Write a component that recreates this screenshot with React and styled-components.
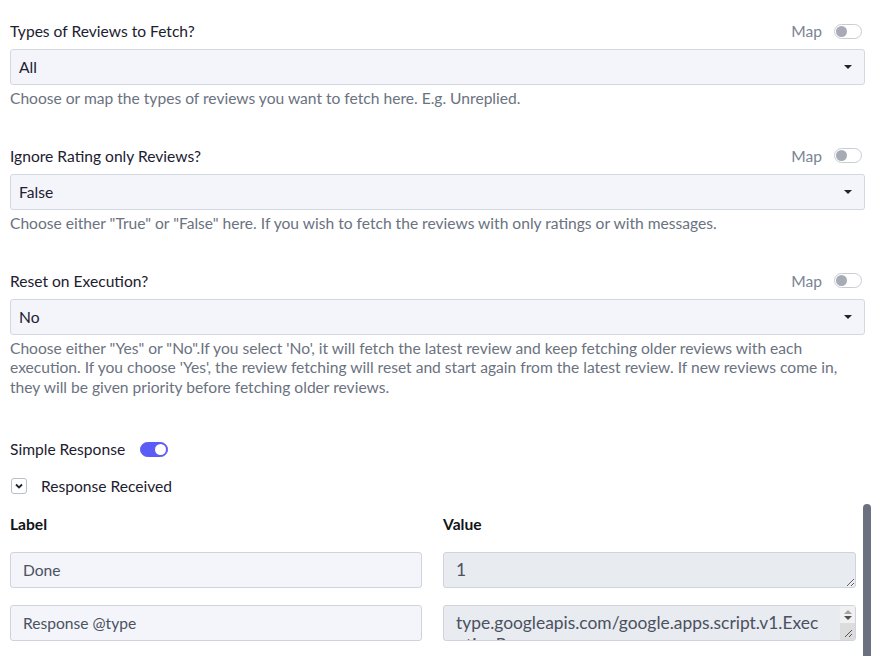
import React from 'react';
import styled, { createGlobalStyle } from 'styled-components';

const GlobalStyle = createGlobalStyle`
  html, body {
    margin: 0;
    padding: 0;
    background: #ffffff;
    overflow: hidden;
  }
  body {
    font-family: Lato, "Open Sans", sans-serif;
    font-size: 15.6px;
    color: #1f2433;
  }
  * {
    box-sizing: border-box;
  }
`;

const Page = styled.div`
  width: 879px;
  height: 656px;
  padding: 20px 14px 0 10px;
  display: flex;
  flex-direction: column;
`;

const Field = styled.section`
  display: flex;
  flex-direction: column;
  margin-bottom: 36px;
`;

const LabelRow = styled.div`
  height: 22px;
  display: flex;
  align-items: center;
  justify-content: space-between;
`;

const FieldLabel = styled.span`
  color: #1c2030;
`;

const MapSwitch = styled.div`
  display: flex;
  align-items: center;
  gap: 12px;
  padding-right: 3px;
  color: #7b8494;
`;

const Toggle = styled.span`
  position: relative;
  width: 28px;
  height: 15px;
  border-radius: 8px;
  border: 1px solid ${(p) => (p.$on ? '#5b5cf6' : '#c9ccd3')};
  background: ${(p) => (p.$on ? '#5b5cf6' : '#ffffff')};
  display: inline-block;

  &::after {
    content: '';
    position: absolute;
    top: 1px;
    left: ${(p) => (p.$on ? '14px' : '1px')};
    width: 11px;
    height: 11px;
    border-radius: 50%;
    background: ${(p) => (p.$on ? '#ffffff' : '#a7abb6')};
  }
`;

const Select = styled.div`
  margin-top: 7px;
  height: 36px;
  border: 1px solid #d3d7e0;
  border-radius: 3px;
  background: #f3f5fa;
  display: flex;
  align-items: center;
  justify-content: space-between;
  padding: 0 12px 0 8px;
  color: #1c2030;
`;

const Caret = styled.span`
  width: 0;
  height: 0;
  border-left: 4px solid transparent;
  border-right: 4px solid transparent;
  border-top: 4px solid #1f2433;
`;

const Help = styled.p`
  margin: 4px 0 0;
  line-height: 19.8px;
  color: #6b7280;
`;

const SwitchRow = styled.div`
  height: 32px;
  margin-top: 3px;
  display: flex;
  align-items: center;
  gap: 15px;
  color: #1c2030;
`;

const Collapse = styled.div`
  height: 22px;
  margin-top: 16px;
  display: flex;
  align-items: center;
  gap: 14px;
  padding-left: 1px;
  color: #1c2030;
`;

const ChevronBox = styled.span`
  width: 16px;
  height: 16px;
  border: 1px solid #b9bec8;
  border-radius: 3px;
  display: flex;
  align-items: center;
  justify-content: center;
`;

/* table panel with its own scroll thumb drawn on the right edge */
const TableScroll = styled.div`
  position: relative;
  margin-top: 9px;
  margin-right: -6px;
  height: 200px;
  overflow: hidden;
`;

const ScrollThumb = styled.div`
  position: absolute;
  top: 0;
  right: 0;
  width: 8px;
  height: 220px;
  border-radius: 4px;
  background: #6b7180;
`;

const Grid = styled.div`
  display: grid;
  grid-template-columns: 412px 413px;
  column-gap: 21px;
  row-gap: 17px;
  padding-top: 10px;
`;

const HeadCell = styled.div`
  height: 20px;
  line-height: 20px;
  margin-bottom: 1px;
  font-weight: 700;
  color: #111318;
`;

const KeyInput = styled.input`
  height: 36px;
  width: 100%;
  border: 1px solid #ced3dc;
  border-radius: 3px;
  background: #f3f5fa;
  padding: 0 12px;
  font-family: inherit;
  font-size: 15.6px;
  color: #4b5160;
  outline: none;
`;

const ValueWrap = styled.div`
  position: relative;
`;

const ValueArea = styled.textarea`
  height: 36px;
  width: 100%;
  display: block;
  border: 1px solid #ced3dc;
  border-radius: 3px;
  background: #e8ebf0;
  padding: 6px ${(p) => (p.$scroll ? '31px' : '12px')} 0 12px;
  font-family: inherit;
  font-size: 17.4px;
  line-height: 22px;
  color: #4b5160;
  resize: vertical;
  outline: none;
  overflow: hidden;
`;

const Gutter = styled.div`
  position: absolute;
  top: 1px;
  right: 1px;
  bottom: 1px;
  width: 15px;
  border-radius: 0 2px 2px 0;
  background: #dcdcdc;
  pointer-events: none;
`;

const GutterArrows = styled.div`
  height: 17px;
  background: #f1f1f1;
  display: flex;
  flex-direction: column;
  align-items: center;
  justify-content: center;
  gap: 2px;
`;

const Arrow = styled.span`
  width: 0;
  height: 0;
  border-left: 4px solid transparent;
  border-right: 4px solid transparent;
  ${(p) => (p.$up ? 'border-bottom: 4px solid #a3a3a3;' : 'border-top: 4px solid #505050;')}
`;

const Grip = styled.svg`
  position: absolute;
  right: 2px;
  bottom: 2px;
`;

const fields = [
  {
    label: 'Types of Reviews to Fetch?',
    value: 'All',
    help: 'Choose or map the types of reviews you want to fetch here. E.g. Unreplied.',
  },
  {
    label: 'Ignore Rating only Reviews?',
    value: 'False',
    help: 'Choose either "True" or "False" here. If you wish to fetch the reviews with only ratings or with messages.',
  },
  {
    label: 'Reset on Execution?',
    value: 'No',
    help: 'Choose either "Yes" or "No".If you select \'No\', it will fetch the latest review and keep fetching older reviews with each execution. If you choose \'Yes\', the review fetching will reset and start again from the latest review. If new reviews come in, they will be given priority before fetching older reviews.',
  },
];

const rows = [
  { key: 'Done', value: '1' },
  { key: 'Response @type', value: 'type.googleapis.com/google.apps.script.v1.ExecutionResponse', scroll: true },
];

const App = () => {
  return (
    <>
      <GlobalStyle />
      <Page>
        {fields.map((f) => (
          <Field key={f.label}>
            <LabelRow>
              <FieldLabel>{f.label}</FieldLabel>
              <MapSwitch>
                Map <Toggle />
              </MapSwitch>
            </LabelRow>
            <Select>
              {f.value}
              <Caret />
            </Select>
            <Help>{f.help}</Help>
          </Field>
        ))}

        <SwitchRow>
          Simple Response <Toggle $on />
        </SwitchRow>

        <Collapse>
          <ChevronBox>
            <svg width="10" height="10" viewBox="0 0 10 10">
              <path d="M2 3.5 L5 6.5 L8 3.5" fill="none" stroke="#1f2433" strokeWidth="1.8" />
            </svg>
          </ChevronBox>
          Response Received
        </Collapse>

        <TableScroll>
          <Grid>
            <HeadCell>Label</HeadCell>
            <HeadCell>Value</HeadCell>
            {rows.map((r) => (
              <React.Fragment key={r.key}>
                <KeyInput defaultValue={r.key} />
                <ValueWrap>
                  <ValueArea defaultValue={r.value} $scroll={r.scroll} />
                  {r.scroll && (
                    <Gutter>
                      <GutterArrows>
                        <Arrow $up />
                        <Arrow />
                      </GutterArrows>
                      <Grip width="9" height="9" viewBox="0 0 9 9">
                        <path d="M1 8 L8 1 M5 8 L8 5" stroke="#555" strokeWidth="1" />
                      </Grip>
                    </Gutter>
                  )}
                </ValueWrap>
              </React.Fragment>
            ))}
          </Grid>
          <ScrollThumb />
        </TableScroll>
      </Page>
    </>
  );
};

export default App;
